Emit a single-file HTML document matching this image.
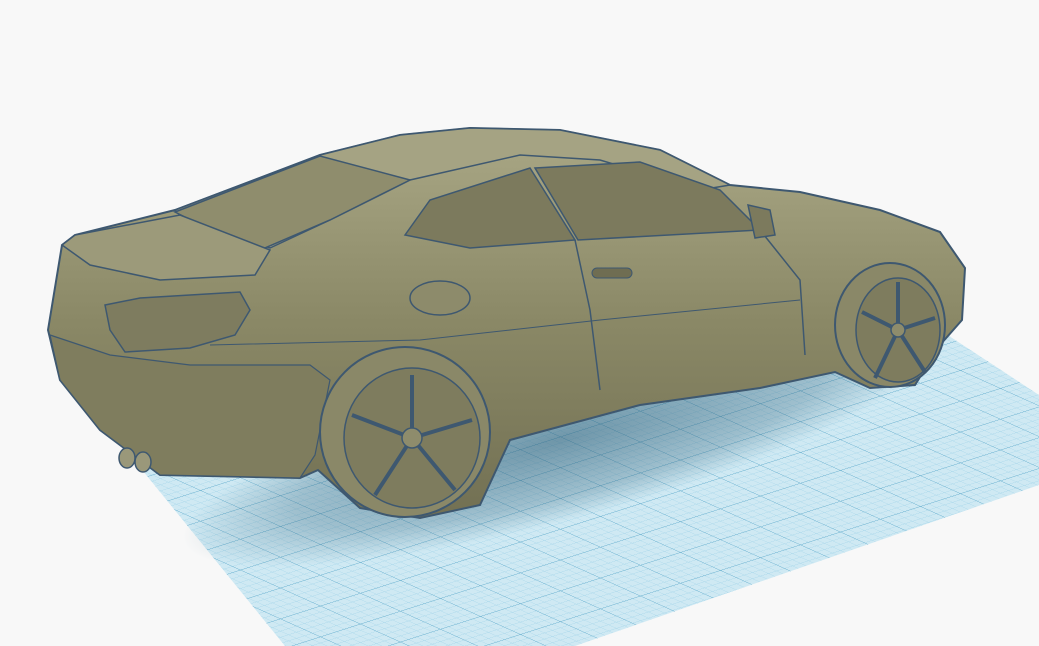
<!DOCTYPE html>
<html><head><meta charset="utf-8"><style>html,body{margin:0;padding:0;background:#f8f8f8;overflow:hidden}svg{display:block}</style></head><body>
<svg width="1039" height="646" viewBox="0 0 1039 646" xmlns="http://www.w3.org/2000/svg">
<defs>
<pattern id="minor" patternUnits="userSpaceOnUse" width="8" height="8" patternTransform="matrix(1,0.45,1,-0.32,0,0)">
<rect width="8" height="8" fill="#cfe9f3"/>
<path d="M0 0H8M0 0V8" stroke="#9dd2e8" stroke-width="0.8" fill="none"/>
</pattern>
<pattern id="major" patternUnits="userSpaceOnUse" width="40" height="40" patternTransform="matrix(1,0.45,1,-0.32,0,0)">
<path d="M0 0H40M0 0V40" stroke="#5aa6c8" stroke-width="1" fill="none"/>
</pattern>
<linearGradient id="body" x1="0" y1="0" x2="0" y2="1">
<stop offset="0" stop-color="#aaa886"/><stop offset="0.5" stop-color="#8a8866"/><stop offset="1" stop-color="#727053"/>
</linearGradient>
<radialGradient id="shadow" cx="0.5" cy="0.5" r="0.5"><stop offset="0" stop-color="#2f5f78" stop-opacity="0.6"/><stop offset="0.7" stop-color="#2f5f78" stop-opacity="0.3"/><stop offset="1" stop-color="#2f5f78" stop-opacity="0"/></radialGradient>
</defs>
<polygon points="130,455 940,330 1039,395 1039,485 575,646 285,646" fill="url(#minor)"/>
<polygon points="130,455 940,330 1039,395 1039,485 575,646 285,646" fill="url(#major)"/>
<ellipse cx="560" cy="440" rx="390" ry="80" fill="url(#shadow)" transform="rotate(-15 560 440)"/>
<!-- car body -->
<path d="M48,330 L62,245 L75,235 L175,210 L320,155 L400,135 L470,128 L560,130 L660,150 L730,185 L800,192 L880,210 L940,232 L965,268 L962,320 L940,345 L915,385 L870,388 L835,372 L760,388 L640,405 L510,440 L480,505 L420,518 L360,508 L318,470 L300,478 L160,475 L100,430 L60,380 Z" fill="url(#body)" stroke="#3e5870" stroke-width="2"/>
<path d="M175,210 L320,155 L400,135 L470,128 L560,130 L660,150 L730,185 L700,190 L600,160 L520,155 L410,180 L330,220 L270,248 L180,215 Z" fill="#a5a383" stroke="#3e5870" stroke-width="1.5"/>
<path d="M175,212 L320,156 L410,180 L330,220 L265,248 L230,240 Z" fill="#8f8d6d" stroke="#3e5870" stroke-width="1.5"/>
<path d="M405,235 L430,200 L530,168 L575,240 L470,248 Z" fill="#7c7a5d" stroke="#3e5870" stroke-width="1.5"/>
<path d="M535,168 L640,162 L720,190 L760,230 L578,240 Z" fill="#7c7a5d" stroke="#3e5870" stroke-width="1.5"/>
<path d="M62,245 L75,235 L180,215 L270,250 L255,275 L160,280 L90,265 Z" fill="#9c9a7a" stroke="#3e5870" stroke-width="1.5"/>
<path d="M105,305 L140,298 L240,292 L250,310 L235,335 L190,348 L125,352 L110,330 Z" fill="#7e7c5f" stroke="#3e5870" stroke-width="1.5"/>
<path d="M50,335 L110,355 L190,365 L310,365 L330,380 L315,455 L300,478 L160,475 L100,430 L60,380 Z" fill="#7f7d5e" stroke="#3e5870" stroke-width="1.2"/>
<path d="M575,240 L590,310 L600,390" stroke="#3e5870" stroke-width="1.5" fill="none"/>
<path d="M760,230 L800,280 L805,355" stroke="#3e5870" stroke-width="1.5" fill="none"/>
<path d="M210,345 L420,340 L600,320 L800,300" stroke="#3e5870" stroke-width="1" fill="none"/>
<ellipse cx="440" cy="298" rx="30" ry="17" fill="#8d8b6b" stroke="#3e5870" stroke-width="1.5"/>
<rect x="592" y="268" width="40" height="10" rx="5" fill="#6f6d52" stroke="#3e5870"/>
<path d="M748,205 L770,210 L775,235 L755,238 Z" fill="#7c7a5d" stroke="#3e5870" stroke-width="1.5"/>
<ellipse cx="127" cy="458" rx="8" ry="10" fill="#9a987a" stroke="#3e5870" stroke-width="1.5"/>
<ellipse cx="143" cy="462" rx="8" ry="10" fill="#9a987a" stroke="#3e5870" stroke-width="1.5"/>
<ellipse cx="405" cy="432" rx="85" ry="85" fill="#8a8868" stroke="#3e5870" stroke-width="2"/>
<ellipse cx="412" cy="438" rx="68" ry="70" fill="#7e7c5e" stroke="#3e5870" stroke-width="1.5"/>
<g stroke="#3e5870" stroke-width="4" fill="none">
<path d="M412,438 L412,375 M412,438 L472,420 M412,438 L455,490 M412,438 L375,495 M412,438 L352,415"/>
</g>
<circle cx="412" cy="438" r="10" fill="#8e8c6c" stroke="#3e5870" stroke-width="1.5"/>
<ellipse cx="890" cy="325" rx="55" ry="62" fill="#8a8868" stroke="#3e5870" stroke-width="2"/>
<ellipse cx="898" cy="330" rx="42" ry="52" fill="#7e7c5e" stroke="#3e5870" stroke-width="1.5"/>
<g stroke="#3e5870" stroke-width="4" fill="none">
<path d="M898,330 L898,282 M898,330 L935,318 M898,330 L925,372 M898,330 L875,378 M898,330 L862,312"/>
</g>
<circle cx="898" cy="330" r="7" fill="#8e8c6c" stroke="#3e5870" stroke-width="1.5"/>
</svg>
</body></html>
